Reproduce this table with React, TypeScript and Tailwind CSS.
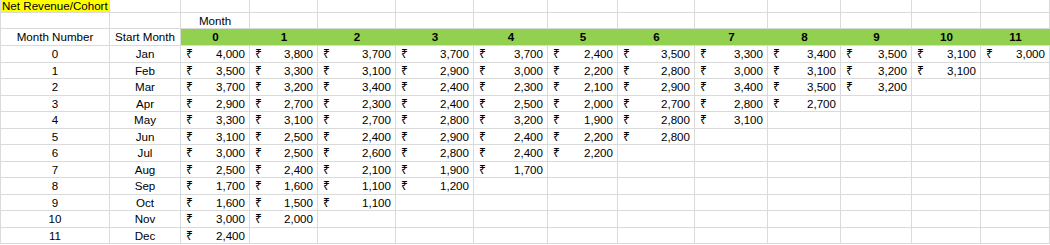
import React from "react";

const data: number[][] = [
  [4000, 3800, 3700, 3700, 3700, 2400, 3500, 3300, 3400, 3500, 3100, 3000],
  [3500, 3300, 3100, 2900, 3000, 2200, 2800, 3000, 3100, 3200, 3100],
  [3700, 3200, 3400, 2400, 2300, 2100, 2900, 3400, 3500, 3200],
  [2900, 2700, 2300, 2400, 2500, 2000, 2700, 2800, 2700],
  [3300, 3100, 2700, 2800, 3200, 1900, 2800, 3100],
  [3100, 2500, 2400, 2900, 2400, 2200, 2800],
  [3000, 2500, 2600, 2800, 2400, 2200],
  [2500, 2400, 2100, 1900, 1700],
  [1700, 1600, 1100, 1200],
  [1600, 1500, 1100],
  [3000, 2000],
  [2400],
];

const months = ["Jan", "Feb", "Mar", "Apr", "May", "Jun", "Jul", "Aug", "Sep", "Oct", "Nov", "Dec"];
const cohorts = Array.from({ length: 12 }, (_, i) => i);

const cell = "box-border border-r border-b border-[#dadada] overflow-hidden whitespace-nowrap";

function Money({ value }: { value?: number }) {
  return (
    <div className={`${cell} flex items-center justify-between pl-[5px] pr-[4px] leading-[16px]`}>
      {value !== undefined && (
        <>
          <span className="text-[12px]" style={{ fontFamily: '"Noto Sans", "DejaVu Sans", sans-serif' }}>
            ₹
          </span>
          <span>{value.toLocaleString("en-US")}</span>
        </>
      )}
    </div>
  );
}

export default function App() {
  return (
    <div
      className="w-[1050px] h-[245px] bg-white text-black text-[11.6px] overflow-hidden"
      style={{ fontFamily: '"Liberation Sans", Arial, sans-serif' }}
    >
      <div className="grid grid-cols-[110px_71px_69px_68px_78px_78px_74px_70px_77px_73px_73px_71px_69px_69px] grid-rows-[13px_16px_17px_17px_16px_17px_16px_17px_16px_17px_16px_17px_16px_17px_16px]">
        {/* row 1 */}
        <div className={`${cell} border-l bg-[#ffff00] pl-[1px] leading-[12px]`}>Net Revenue/Cohort</div>
        {cohorts.concat([12]).map((i) => (
          <div key={`r1-${i}`} className={cell} />
        ))}

        {/* row 2 */}
        <div className={`${cell} border-l`} />
        <div className={cell} />
        <div className={`${cell} flex items-center justify-center leading-[16px]`}>Month</div>
        {cohorts.slice(1).map((i) => (
          <div key={`r2-${i}`} className={cell} />
        ))}

        {/* row 3 */}
        <div className={`${cell} border-l flex items-center justify-center leading-[16px]`}>Month Number</div>
        <div className={`${cell} flex items-center justify-center leading-[16px]`}>Start Month</div>
        {cohorts.map((i) => (
          <div
            key={`h-${i}`}
            className="box-border border-b border-[#dadada] bg-[#92d050] flex items-center justify-center font-bold leading-[16px]"
          >
            {i}
          </div>
        ))}

        {/* data rows */}
        {data.map((row, r) => (
          <React.Fragment key={`d-${r}`}>
            <div className={`${cell} border-l flex items-center justify-center leading-[16px]`}>{r}</div>
            <div className={`${cell} flex items-center justify-center leading-[16px]`}>{months[r]}</div>
            {cohorts.map((c) => (
              <Money key={`d-${r}-${c}`} value={row[c]} />
            ))}
          </React.Fragment>
        ))}
      </div>
    </div>
  );
}
